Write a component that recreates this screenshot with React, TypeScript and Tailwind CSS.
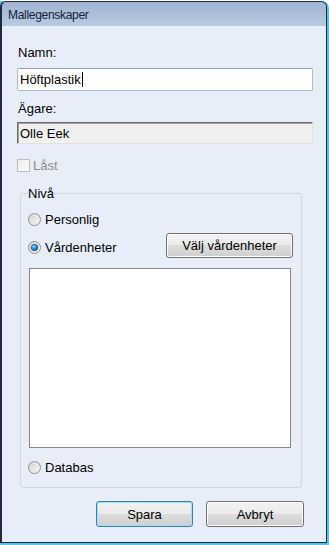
import React from "react";

const font = { fontFamily: '"Liberation Sans", Arial, sans-serif' };

function Radio({ checked = false }: { checked?: boolean }) {
  const id = checked ? "rc" : "ru";
  return (
    <svg width="13" height="13" viewBox="0 0 13 13" className="shrink-0">
      <defs>
        <linearGradient id={id + "g"} x1="0" y1="0" x2="1" y2="1">
          <stop offset="0" stopColor="#cfcfcf" />
          <stop offset="1" stopColor="#fbfbfb" />
        </linearGradient>
        <radialGradient id={id + "d"} cx="0.4" cy="0.35" r="0.7">
          <stop offset="0" stopColor="#8fd8ff" />
          <stop offset="0.5" stopColor="#2f8fd6" />
          <stop offset="1" stopColor="#0b3f74" />
        </radialGradient>
      </defs>
      <circle cx="6.5" cy="6.5" r="6" fill={`url(#${id}g)`} stroke="#8e8f8f" strokeWidth="1" />
      <circle cx="6.5" cy="6.5" r="4.5" fill="none" stroke="#e8e8e8" strokeWidth="1" opacity="0.6" />
      {checked && (
        <circle cx="6.5" cy="6.5" r="3.3" fill={`url(#${id}d)`} stroke="#1c4a78" strokeWidth="0.6" />
      )}
    </svg>
  );
}

function WinButton({ children, def = false, className = "" }: { children: React.ReactNode; def?: boolean; className?: string }) {
  return (
    <div
      className={
        "flex items-center justify-center rounded-[3px] border text-[13px] text-black bg-[linear-gradient(to_bottom,#f2f2f2_0%,#ebebeb_50%,#dddddd_50%,#cfcfcf_100%)] " +
        (def
          ? "border-[#3c7fb1] shadow-[inset_0_0_0_1px_#9fe0f7] "
          : "border-[#707070] shadow-[inset_0_0_0_1px_#fcfcfc] ") +
        className
      }
    >
      {children}
    </div>
  );
}

export default function App() {
  return (
    <div className="w-[329px] h-[545px] bg-white pt-[1px]" style={font}>
      <div className="h-[544px] w-[329px] bg-[#52c3ee] pr-[2px] pb-[2px] rounded-tr-[7px]">
        <div className="h-full flex flex-col border border-l-2 border-[#1f2a3a] rounded-t-[6px] overflow-hidden">
          {/* Title bar */}
          <div className="h-[24px] shrink-0 flex items-center pl-[6px] pt-[1px] bg-[linear-gradient(to_bottom,#9fb4d1,#b8cbe4)]">
            <span className="text-[12px] tracking-[-0.3px] text-[#142036] leading-none">Mallegenskaper</span>
          </div>
          {/* Body */}
          <div className="flex-1 bg-[#e7eef9] pl-[15px] pr-[13px] pt-[19px] text-[13px] leading-[15px] text-black">
            <div className="pl-[1px]">Namn:</div>
            <div className="mt-[8px] h-[23px] flex items-center rounded-[2px] border border-[#a7bcd6] border-t-[#8fa6c3] bg-white pl-[2px]">
              <span>Höftplastik</span>
              <span className="ml-[1px] w-[1px] h-[15px] bg-black" />
            </div>
            <div className="mt-[10px] pl-[1px]">Ägare:</div>
            <div className="mt-[6px] h-[22px] flex items-center border border-t-[#6d6d6d] border-l-[#6d6d6d] border-r-[#e3e3e3] border-b-[#e3e3e3] shadow-[inset_1px_1px_0_#a0a0a0] bg-[#f0f0f0] pl-[2px]">
              Olle Eek
            </div>
            <div className="mt-[14px] h-[15px] flex items-center gap-[3px]">
              <div className="w-[13px] h-[13px] border border-[#bcbcbc] bg-[linear-gradient(135deg,#eeeeee,#fcfcfc)]" />
              <span className="text-[#8d8d8d]">Låst</span>
            </div>
            <fieldset className="mt-[13px] ml-[3px] w-[282px] border border-[#cfd7e0] rounded-[3px] pl-[7px] pr-[10px] pt-[11px] pb-[12px]">
              <legend className="px-0 leading-[15px]">Nivå</legend>
              <div className="h-[15px] flex items-center gap-[4px]">
                <Radio />
                <span>Personlig</span>
              </div>
              <div className="mt-[6px] flex items-start">
                <div className="mt-[7px] h-[15px] flex items-center gap-[4px]">
                  <Radio checked />
                  <span>Vårdenheter</span>
                </div>
                <WinButton className="ml-auto -mr-[2px] w-[127px] h-[25px]">Välj vårdenheter</WinButton>
              </div>
              <div className="mt-[10px] ml-[1px] h-[180px] border border-[#828790] bg-white" />
              <div className="mt-[12px] h-[15px] flex items-center gap-[4px]">
                <Radio />
                <span>Databas</span>
              </div>
            </fieldset>
            <div className="mt-[13px] flex">
              <WinButton def className="ml-[79px] w-[97px] h-[26px]">Spara</WinButton>
              <WinButton className="ml-[13px] w-[98px] h-[26px]">Avbryt</WinButton>
            </div>
          </div>
        </div>
      </div>
    </div>
  );
}
